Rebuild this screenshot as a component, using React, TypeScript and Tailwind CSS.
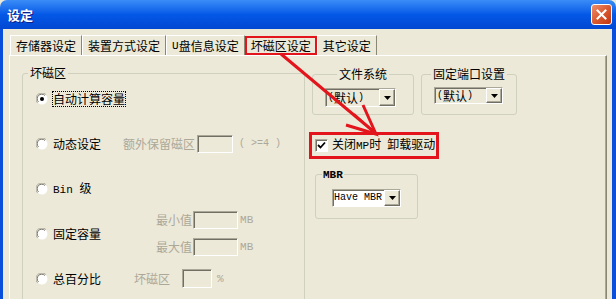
import React from "react";

const mono = "font-['Liberation_Mono',monospace] text-[10px]";
const mono11 = "font-['Liberation_Mono',monospace] text-[11px]";

function Radio({ checked }: { checked?: boolean }) {
  return (
    <svg width="12" height="12" viewBox="0 0 12 12" className="shrink-0">
      <circle cx="6" cy="6" r="5.5" fill="#fff" />
      <path d="M1.6 9.9 A5.5 5.5 0 0 1 9.9 1.6" stroke="#ACA899" fill="none" strokeWidth="1" />
      <path d="M2.5 8.9 A4.5 4.5 0 0 1 8.9 2.5" stroke="#716F64" fill="none" strokeWidth="1" />
      {checked && <circle cx="6" cy="6" r="2" fill="#000" />}
    </svg>
  );
}

function DropButton() {
  return (
    <div className="w-[16px] h-full shrink-0 flex items-center justify-center bg-[#ECE9D8] border border-t-white border-l-white border-r-[#716F64] border-b-[#716F64] shadow-[inset_-1px_-1px_0_#ACA899]">
      <svg width="7" height="4" viewBox="0 0 7 4">
        <polygon points="0,0 7,0 3.5,4" fill="#000" />
      </svg>
    </div>
  );
}

function Tab({ children, selected }: { children: React.ReactNode; selected?: boolean }) {
  if (selected) {
    return (
      <div className="h-[19px] flex items-center px-[4px] border-2 border-[#E3141B] text-black leading-[14px]">
        {children}
      </div>
    );
  }
  return (
    <div className="h-[20px] flex items-center px-[5px] border-t border-l border-r border-t-white border-l-white border-r-[#8A8775] text-black leading-[14px]">
      {children}
    </div>
  );
}

function Sunken({ className }: { className: string }) {
  return (
    <div
      className={`border border-t-[#ACA899] border-l-[#ACA899] border-b-white border-r-white bg-[#ECE9D8] shadow-[inset_1px_1px_0_#716F64] shrink-0 ${className}`}
    />
  );
}

export default function App() {
  return (
    <div className="relative w-[616px] h-[299px] overflow-hidden bg-[#ECE9D8] font-['Noto_Sans_CJK_SC',sans-serif] text-[12px] leading-[14px] text-black">
      {/* Title bar */}
      <div className="h-[29px] flex items-center justify-between pl-[7px] pr-[4px] rounded-t-[7px] bg-gradient-to-b from-[#3A8CF7] via-[#0458E6] to-[#0247D2]">
        <span className="text-white font-bold text-[13px] [text-shadow:1px_1px_0_#0A1E8C]">设定</span>
        <div className="w-[21px] h-[21px] rounded-[3px] border border-white flex items-center justify-center bg-gradient-to-br from-[#EE8E6C] via-[#D95A30] to-[#C0330E]">
          <svg width="11" height="11" viewBox="0 0 11 11">
            <path d="M1.5 1.5 L9.5 9.5 M9.5 1.5 L1.5 9.5" stroke="#fff" strokeWidth="2" strokeLinecap="square" />
          </svg>
        </div>
      </div>

      {/* Body */}
      <div className="flex flex-col h-[270px] border-l-[3px] border-r-[4px] border-[#0A4FDC] bg-[#ECE9D8] pl-[6px] pr-[5px] pt-[6px]">
        {/* Tabs */}
        <div className="flex items-end h-[20px] pl-[1px]">
          <Tab>存储器设定</Tab>
          <Tab>装置方式设定</Tab>
          <Tab>
            <span className={mono11}>U</span>盘信息设定
          </Tab>
          <Tab selected>坏磁区设定</Tab>
          <Tab>其它设定</Tab>
        </div>

        {/* Panel */}
        <div className="flex-1 flex items-start border-t border-l border-r border-t-white border-l-white border-r-[#8A8775] shadow-[inset_-1px_0_0_#ACA899] pl-[12px] pt-[10px]">
          {/* Left group */}
          <fieldset className="w-[283px] h-[240px] border border-[#D0D0BF] rounded-[3px] shrink-0">
            <legend className="ml-[5px] px-[2px] leading-[14px]">坏磁区</legend>
            <div className="flex flex-col -mt-[4px]">
              <div className="h-[45px] flex items-center pl-[13px]">
                <Radio checked />
                <span className="ml-[4px] border border-dotted border-black leading-[12px] py-[1px]">自动计算容量</span>
              </div>
              <div className="h-[45px] flex items-center pl-[13px]">
                <Radio />
                <span className="ml-[5px]">动态设定</span>
                <span className="ml-[22px] text-[#ACA899]">额外保留磁区</span>
                <Sunken className="ml-[2px] w-[36px] h-[18px]" />
                <span className={`ml-[6px] text-[#ACA899] ${mono}`}>( &gt;=4 )</span>
              </div>
              <div className="h-[45px] flex items-center pl-[13px]">
                <Radio />
                <span className="ml-[5px]">
                  <span className={mono11}>Bin </span>级
                </span>
              </div>
              <div className="h-[45px] flex items-center pl-[13px]">
                <Radio />
                <span className="ml-[5px]">固定容量</span>
                <div className="ml-[55px] flex flex-col gap-[9px]">
                  <div className="flex items-center h-[18px]">
                    <span className="text-[#ACA899]">最小值</span>
                    <Sunken className="ml-[1px] w-[45px] h-[18px]" />
                    <span className={`ml-[2px] text-[#ACA899] ${mono11}`}>MB</span>
                  </div>
                  <div className="flex items-center h-[18px]">
                    <span className="text-[#ACA899]">最大值</span>
                    <Sunken className="ml-[1px] w-[45px] h-[18px]" />
                    <span className={`ml-[2px] text-[#ACA899] ${mono11}`}>MB</span>
                  </div>
                </div>
              </div>
              <div className="h-[45px] flex items-center pl-[13px]">
                <Radio />
                <span className="ml-[5px]">总百分比</span>
                <span className="ml-[33px] text-[#ACA899]">坏磁区</span>
                <Sunken className="ml-[12px] w-[30px] h-[19px]" />
                <span className={`ml-[5px] text-[#ACA899] ${mono11}`}>%</span>
              </div>
            </div>
          </fieldset>

          {/* Right column */}
          <div className="flex flex-col ml-[7px] mt-[1px]">
            <div className="flex gap-[7px]">
              <fieldset className="w-[102px] border border-[#D0D0BF] rounded-[3px]">
                <legend className="mx-auto px-[2px] leading-[14px]">文件系统</legend>
                <div className="mt-[7px] mb-[7px] ml-[12px] w-[71px] h-[19px] flex border border-t-[#ACA899] border-l-[#ACA899] border-b-white border-r-white">
                  <div className="flex-1 flex items-center pl-[2px] shadow-[inset_1px_1px_0_#716F64] bg-[#ECE9D8]">
                    <span className={mono}>(</span>默认<span className={mono}>)</span>
                  </div>
                  <DropButton />
                </div>
              </fieldset>
              <fieldset className="w-[96px] border border-[#D0D0BF] rounded-[3px]">
                <legend className="mx-auto px-[2px] leading-[14px]">固定端口设置</legend>
                <div className="mt-[6px] ml-[12px] w-[69px] h-[17px] flex border border-t-[#ACA899] border-l-[#ACA899] border-b-white border-r-white">
                  <div className="flex-1 flex items-center pl-[2px] shadow-[inset_1px_1px_0_#716F64] bg-[#ECE9D8]">
                    <span className={mono}>(</span>默认<span className={mono}>)</span>
                  </div>
                  <DropButton />
                </div>
              </fieldset>
            </div>

            {/* Checkbox highlighted */}
            <div className="self-start mt-[17px] -ml-[3px] h-[27px] flex items-center border-[3px] border-[#E3141B] pl-[3px] pr-[1px]">
              <div className="w-[13px] h-[13px] flex items-center justify-center bg-white border border-t-[#ACA899] border-l-[#ACA899] border-b-white border-r-white shadow-[inset_1px_1px_0_#716F64]">
                <svg width="9" height="9" viewBox="0 0 9 9">
                  <path d="M1 4 L3.5 6.5 L8 1.5" stroke="#000" strokeWidth="1.8" fill="none" />
                </svg>
              </div>
              <span className="ml-[4px]">
                关闭<span className={mono11}>MP</span>时<span className={mono}> </span>卸载驱动
              </span>
            </div>

            {/* MBR group */}
            <fieldset className="self-start mt-[7px] ml-[3px] w-[103px] border border-[#D0D0BF] rounded-[3px]">
              <legend className="ml-[6px] px-[1px] leading-[14px]">
                <span className={`${mono11} font-bold`}>MBR</span>
              </legend>
              <div className="mt-[7px] mb-[11px] ml-[16px] w-[69px] h-[18px] flex border border-t-[#ACA899] border-l-[#ACA899] border-b-white border-r-white">
                <div className="flex-1 flex items-center pl-[1px] shadow-[inset_1px_1px_0_#716F64] bg-white">
                  <span className={mono}>Have MBR</span>
                </div>
                <DropButton />
              </div>
            </fieldset>
          </div>
        </div>
      </div>

      {/* Annotation arrow */}
      <svg className="absolute left-0 top-0 pointer-events-none" width="616" height="299" viewBox="0 0 616 299">
        <line x1="281" y1="54" x2="373" y2="131" stroke="#E3141B" strokeWidth="3" />
        <polyline points="346,125 376,134 363,105" fill="none" stroke="#E3141B" strokeWidth="3" strokeLinejoin="miter" />
        <line x1="354" y1="114" x2="376" y2="134" stroke="#E3141B" strokeWidth="2" />
      </svg>
    </div>
  );
}
